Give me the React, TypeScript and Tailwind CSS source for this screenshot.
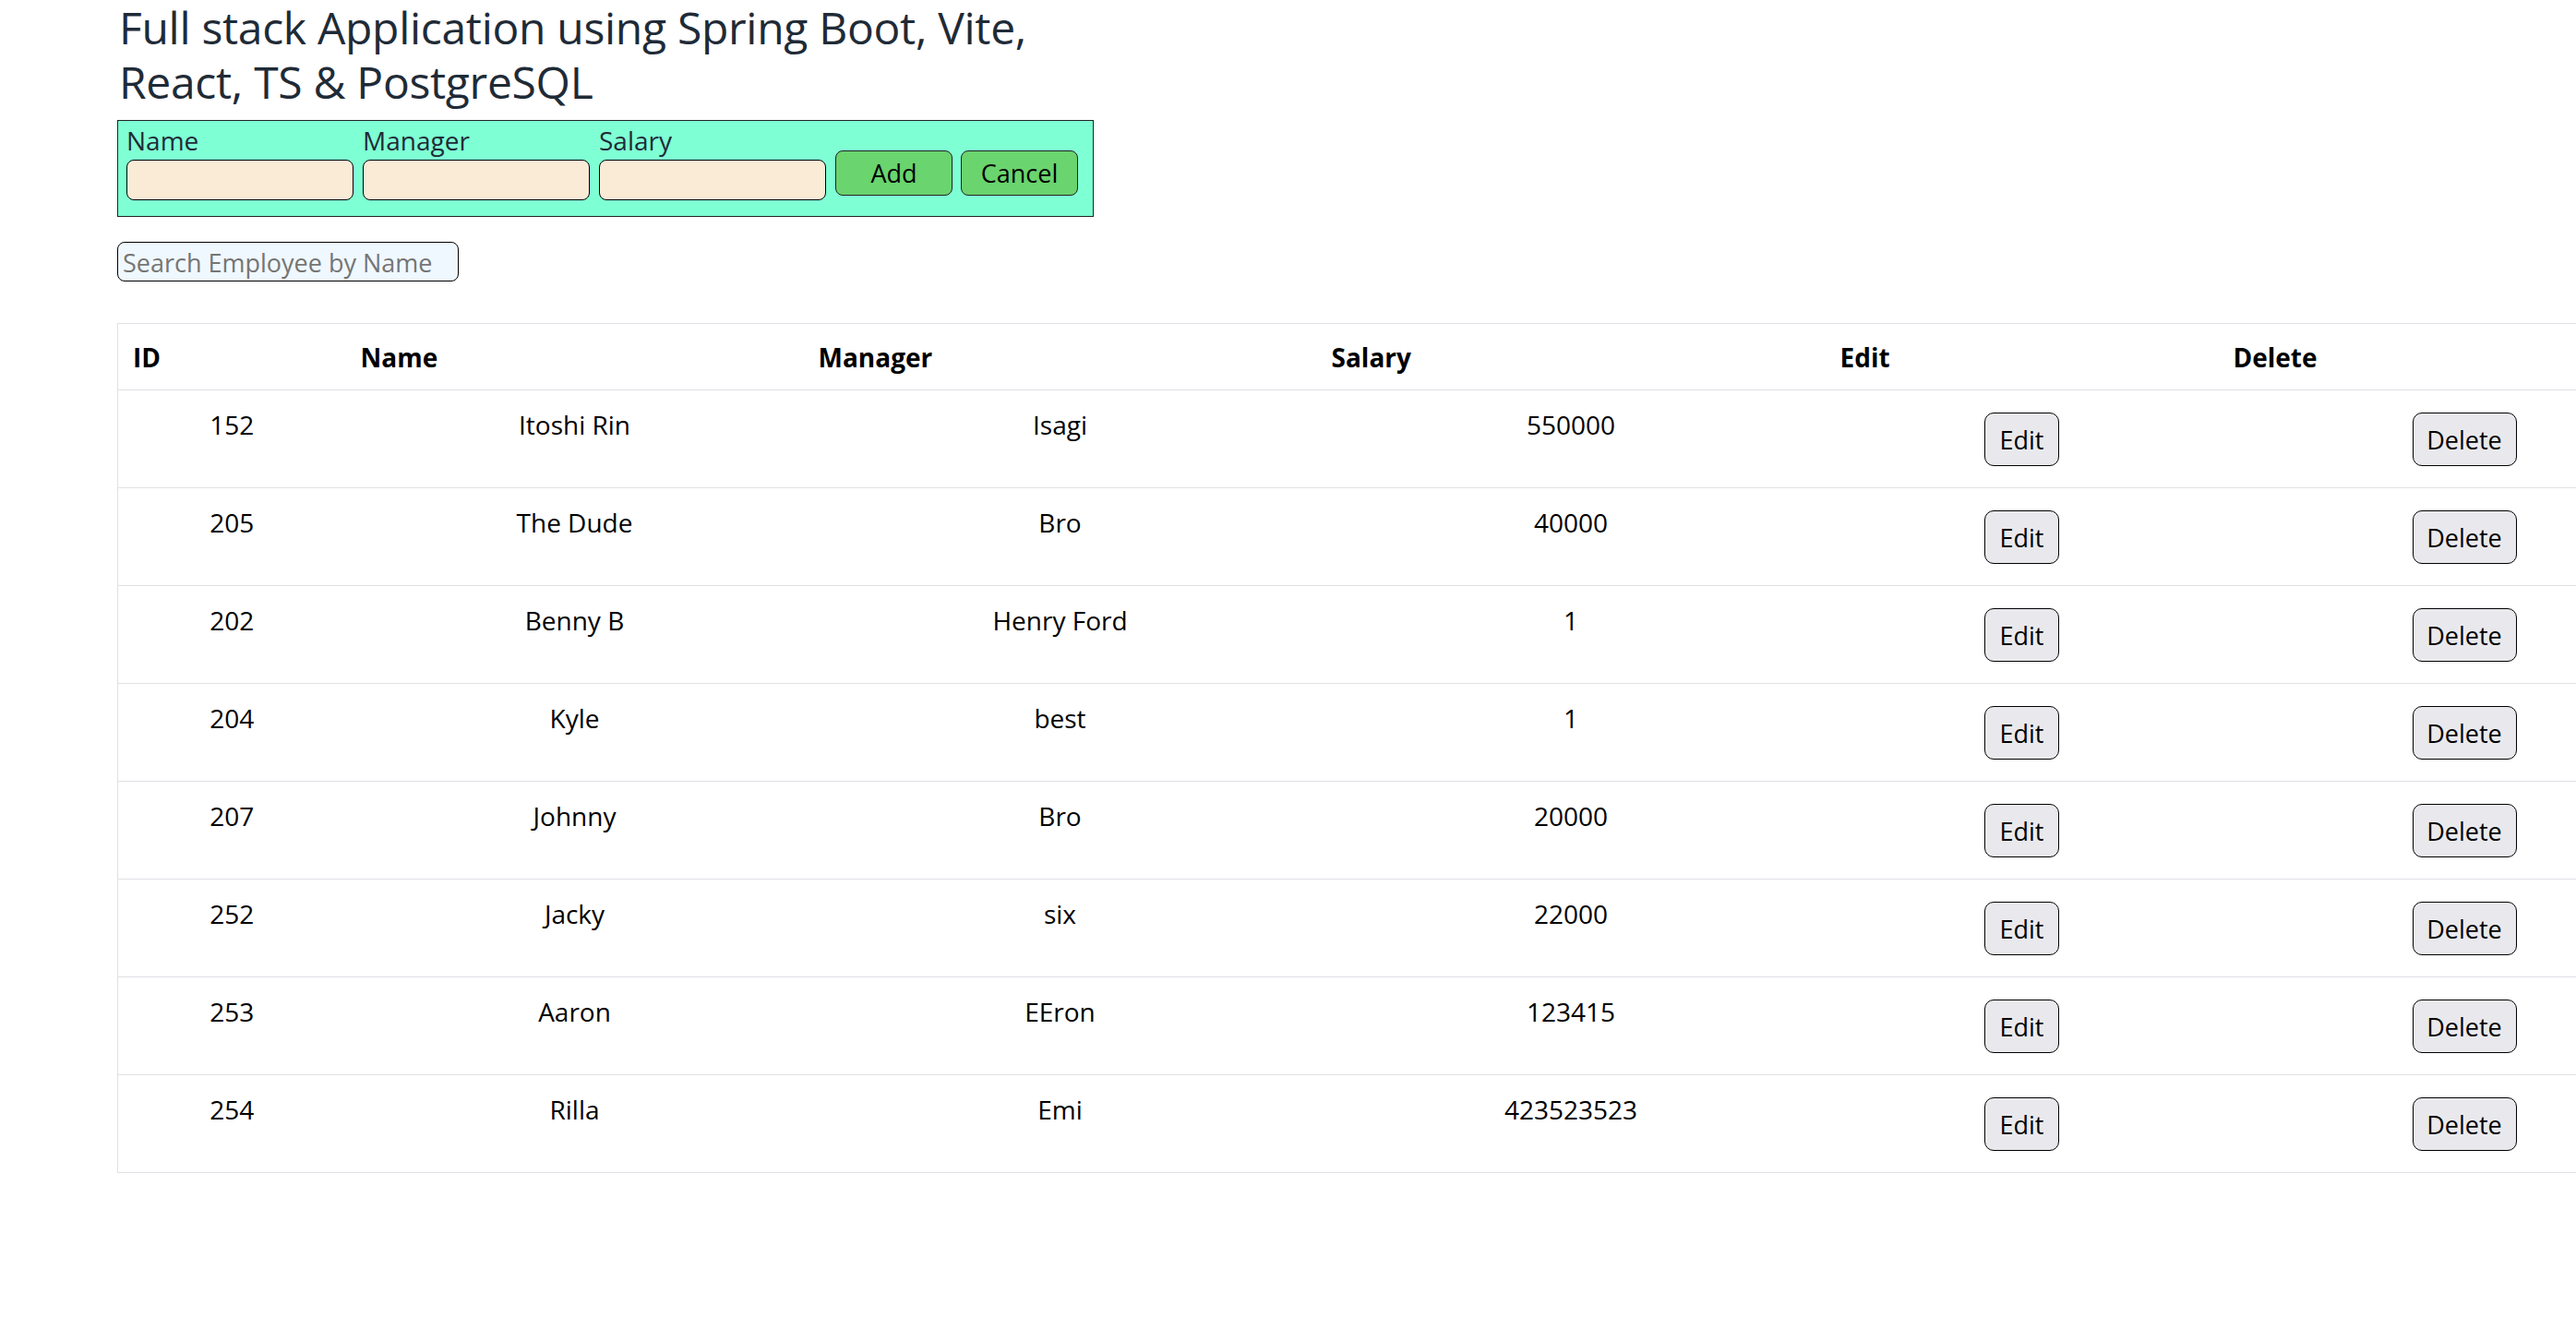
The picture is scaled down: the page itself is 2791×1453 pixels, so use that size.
import React from "react";

type Employee = {
  id: number;
  name: string;
  manager: string;
  salary: number;
};

const employees: Employee[] = [
  { id: 152, name: "Itoshi Rin", manager: "Isagi", salary: 550000 },
  { id: 205, name: "The Dude", manager: "Bro", salary: 40000 },
  { id: 202, name: "Benny B", manager: "Henry Ford", salary: 1 },
  { id: 204, name: "Kyle", manager: "best", salary: 1 },
  { id: 207, name: "Johnny", manager: "Bro", salary: 20000 },
  { id: 252, name: "Jacky", manager: "six", salary: 22000 },
  { id: 253, name: "Aaron", manager: "EEron", salary: 123415 },
  { id: 254, name: "Rilla", manager: "Emi", salary: 423523523 },
];

const Field = ({ label }: { label: string }) => {
  return (
    <div className="flex flex-col">
      <label className="text-[28px] leading-[34px] text-[#1f2b37]">{label}</label>
      <input
        className="mt-[4px] h-[44px] w-[246px] rounded-[8px] border border-black bg-[#faebd7] px-2 text-[27px] outline-none"
        type="text"
      />
    </div>
  );
};

const EmployeeForm = () => {
  return (
    <form className="mt-[12px] flex w-[1058px] items-end gap-[10px] border border-[#222] bg-[#7fffd4] pb-[17px] pl-[9px] pt-[4px]">
      <Field label="Name" />
      <Field label="Manager" />
      <Field label="Salary" />
      <div className="mb-[5px] flex gap-[9px]">
        <button
          type="button"
          className="h-[49px] w-[127px] rounded-[8px] border border-[#222] bg-[#6ad46e] pt-[2px] text-[27px] text-black"
        >
          Add
        </button>
        <button
          type="button"
          className="h-[49px] w-[127px] rounded-[8px] border border-[#222] bg-[#6ad46e] pt-[2px] text-[27px] text-black"
        >
          Cancel
        </button>
      </div>
    </form>
  );
};

const GrayButton = ({ label, width }: { label: string; width: string }) => {
  return (
    <button
      type="button"
      className={`h-[58px] ${width} rounded-[10px] border border-black bg-[#e9e9ed] pt-[2px] text-[27px] text-black`}
    >
      {label}
    </button>
  );
};

const EmployeeTable = () => {
  return (
    <table className="mt-[45px] w-[2809px] table-fixed border-collapse border-l border-t border-[#e0e0e6] text-[28px] text-black">
      <colgroup>
        <col className="w-[247px]" />
        <col className="w-[496px]" />
        <col className="w-[556px]" />
        <col className="w-[551px]" />
        <col className="w-[426px]" />
        <col className="w-[533px]" />
      </colgroup>
      <thead>
        <tr className="h-[72px] border-b border-[#e0e0e6]">
          <th className="pl-[16px] text-left font-bold">ID</th>
          <th className="pl-[16px] text-left font-bold">Name</th>
          <th className="pl-[16px] text-left font-bold">Manager</th>
          <th className="pl-[16px] text-left font-bold">Salary</th>
          <th className="pl-[16px] text-left font-bold">Edit</th>
          <th className="pl-[16px] text-left font-bold">Delete</th>
        </tr>
      </thead>
      <tbody>
        {employees.map((e) => (
          <tr key={e.id} className="h-[106px] border-b border-[#e0e0e6]">
            <td className="pt-[23px] text-center align-top leading-[28px]">{e.id}</td>
            <td className="pt-[23px] text-center align-top leading-[28px]">{e.name}</td>
            <td className="pt-[23px] text-center align-top leading-[28px]">{e.manager}</td>
            <td className="pt-[23px] text-center align-top leading-[28px]">{e.salary}</td>
            <td className="pt-[24px] text-center align-top">
              <GrayButton label="Edit" width="w-[81px]" />
            </td>
            <td className="pt-[24px] text-center align-top">
              <GrayButton label="Delete" width="w-[113px]" />
            </td>
          </tr>
        ))}
      </tbody>
    </table>
  );
};

const App = () => {
  return (
    <div className="min-h-screen w-full overflow-hidden bg-white pl-[127px] font-['Open_Sans',sans-serif]">
      <h1 className="pl-[2px] text-[48px] font-normal leading-[59px] tracking-[-0.3px] text-[#1f2b37]">
        Full stack Application using Spring Boot, Vite,
        <br />
        React, TS &amp; PostgreSQL
      </h1>
      <EmployeeForm />
      <input
        className="mt-[27px] block h-[43px] w-[370px] rounded-[8px] border border-black bg-[#f0f8ff] px-[5px] pt-[2px] text-[27px] outline-none placeholder:text-[#757575]"
        placeholder="Search Employee by Name"
        type="text"
      />
      <EmployeeTable />
    </div>
  );
};

export default App;
